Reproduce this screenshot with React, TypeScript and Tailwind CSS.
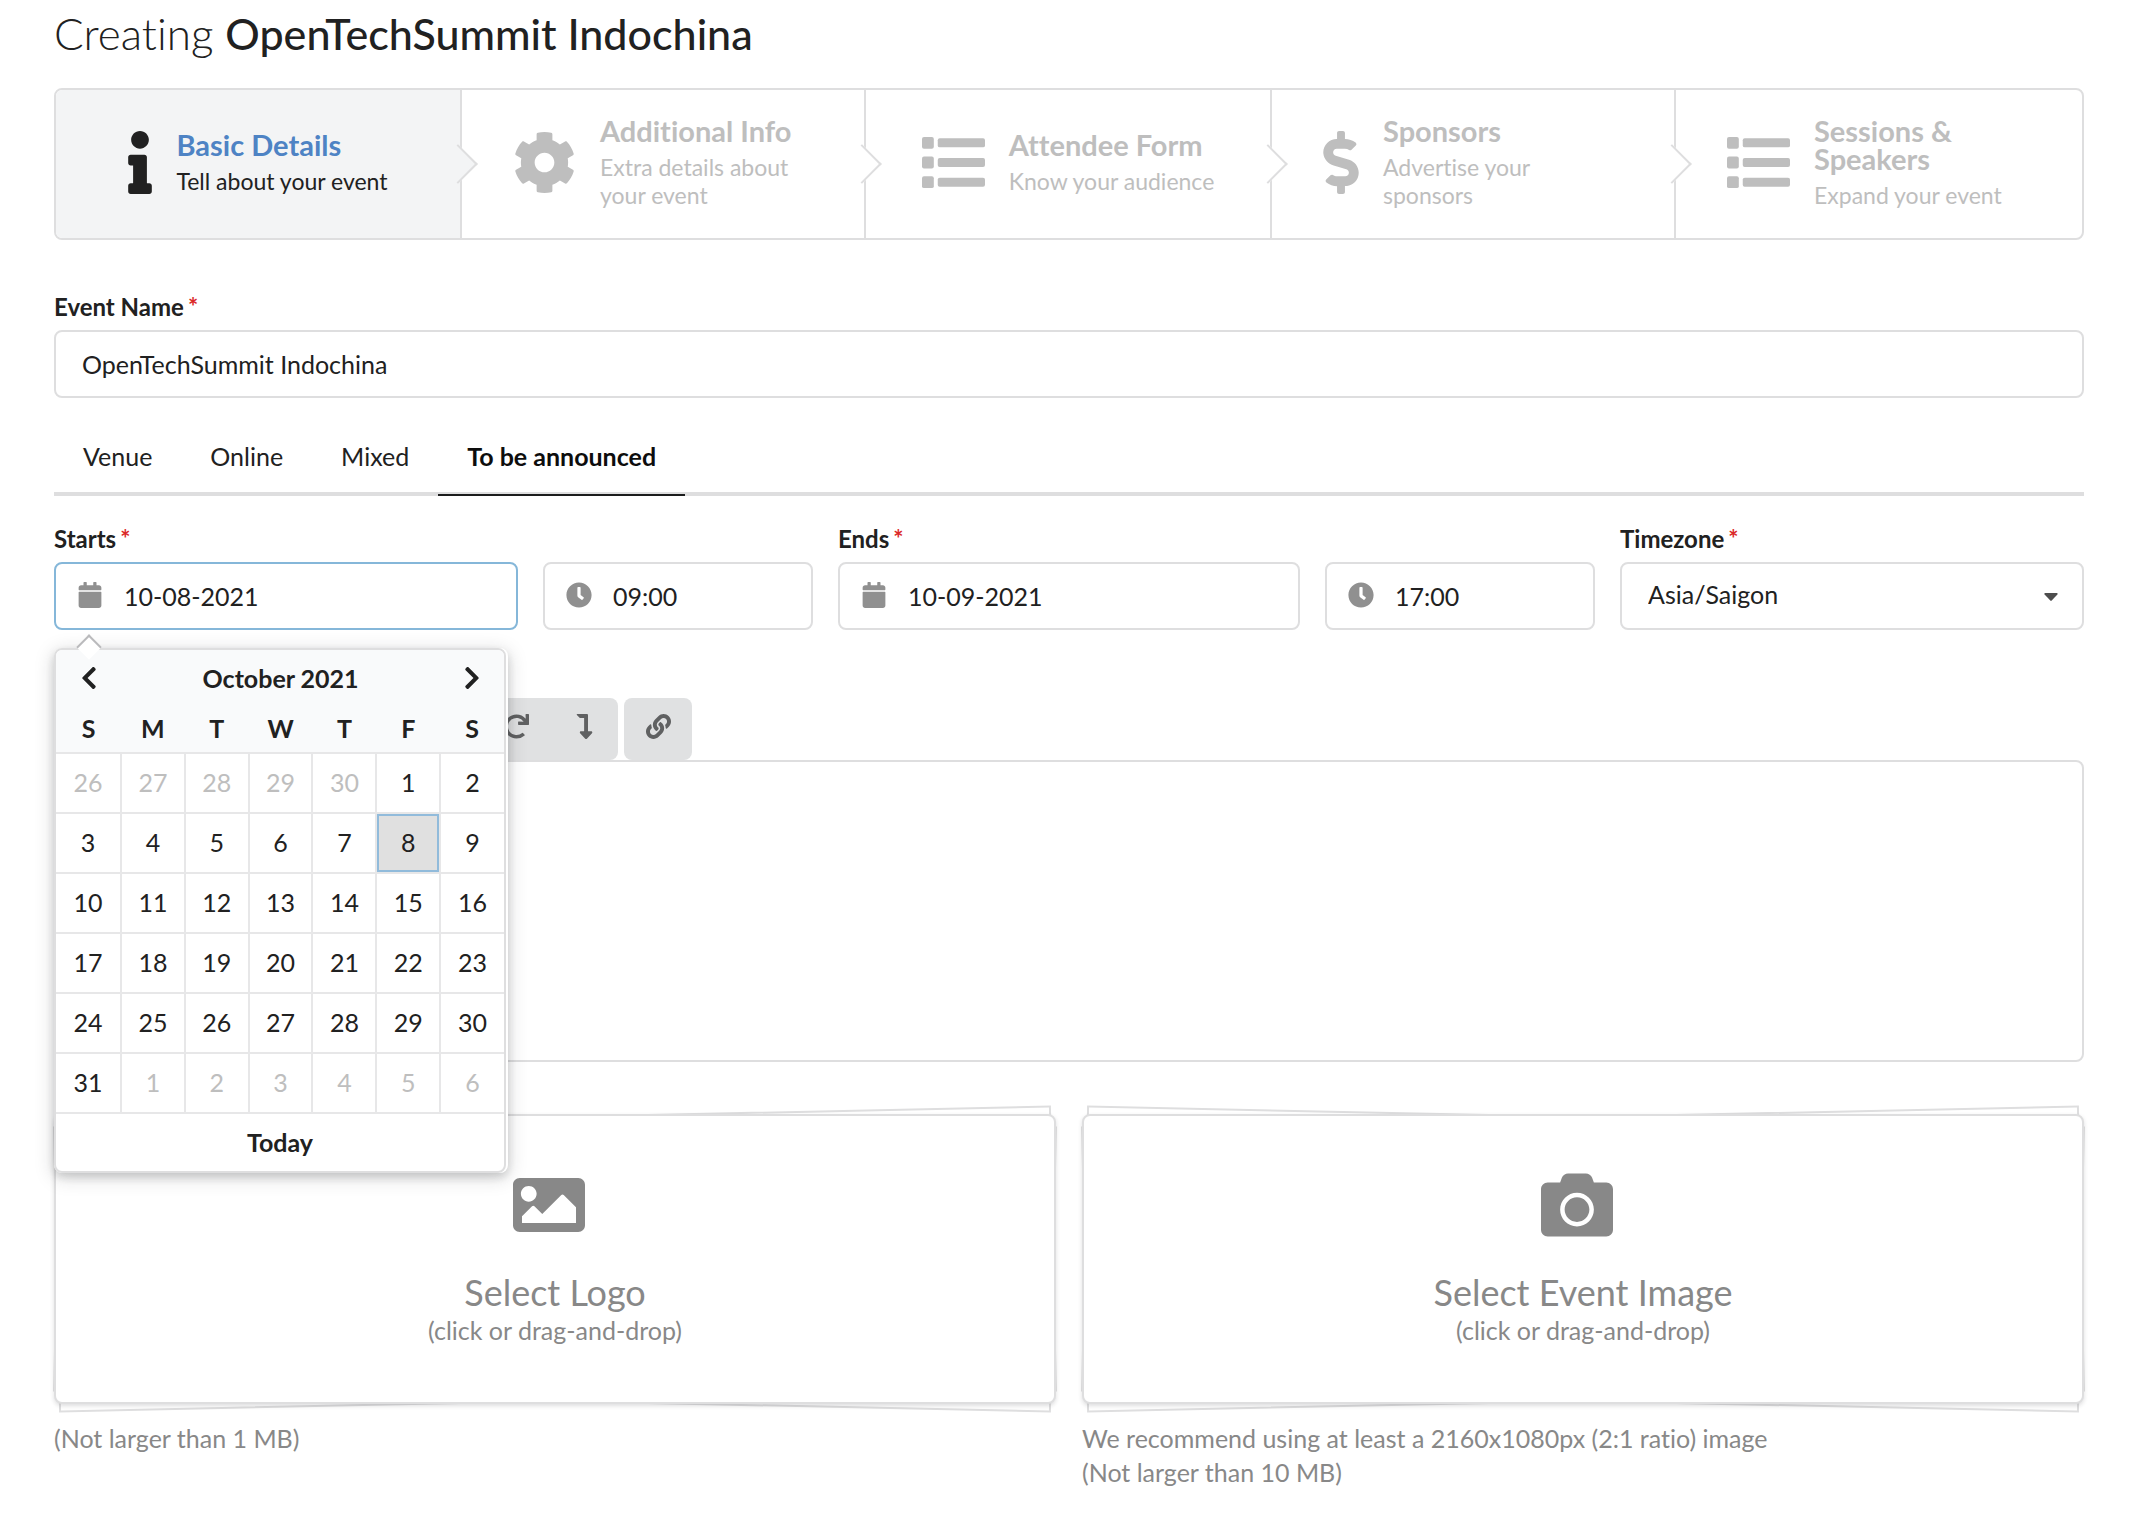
import type { ReactNode } from "react";
import type { IconType } from "react-icons";
import {
  FaBold,
  FaCalendar,
  FaCamera,
  FaChevronLeft,
  FaChevronRight,
  FaClock,
  FaCog,
  FaDollarSign,
  FaImage,
  FaInfo,
  FaItalic,
  FaLevelDownAlt,
  FaLink,
  FaListOl,
  FaListUl,
  FaRedo,
  FaStrikethrough,
  FaUndo,
} from "react-icons/fa";

function ThListIcon({ className }: { className: string }) {
  return (
    <svg viewBox="0 0 512 512" fill="currentColor" className={className} aria-hidden="true">
      {[48, 208, 368].map((y) => (
        <g key={y}>
          <rect x="0" y={y} width="96" height="96" rx="16" />
          <rect x="128" y={y + 11} width="384" height="74" rx="16" />
        </g>
      ))}
    </svg>
  );
}

type Step = { title: string; text: string; icon: ReactNode; active?: boolean };

const steps: Step[] = [
  { title: "Basic Details", text: "Tell about your event", icon: <FaInfo className="h-[63px] w-6" />, active: true },
  { title: "Additional Info", text: "Extra details about your event", icon: <FaCog className="size-[63px]" /> },
  { title: "Attendee Form", text: "Know your audience", icon: <ThListIcon className="size-[63px]" /> },
  { title: "Sponsors", text: "Advertise your sponsors", icon: <FaDollarSign className="h-[63px] w-9" /> },
  { title: "Sessions & Speakers", text: "Expand your event", icon: <ThListIcon className="size-[63px]" /> },
];

function Steps() {
  return (
    <ol className="mt-[26px] grid min-h-[152px] grid-cols-[406fr_404fr_406fr_404fr_406fr] rounded-lg border-2 border-[#dededf]">
      {steps.map((s, i) => (
        <li
          key={s.title}
          className={
            "relative flex items-center justify-center px-[51px] pb-[3px] " +
            (i < 4 ? "border-r-2 border-[#dededf] " : "") +
            (s.active ? "rounded-l-md bg-[#f3f4f5] text-[#212121]" : "text-[#bebebe]")
          }
        >
          <span className="mr-6 shrink-0">{s.icon}</span>
          <div className="min-w-0">
            <div className={"text-[29px] leading-7 font-bold " + (s.active ? "text-[#4e83c4]" : "")}>{s.title}</div>
            <div className="mt-2 text-[23px] leading-7">{s.text}</div>
          </div>
          {i < 4 && (
            <span
              className={
                "absolute top-1/2 -right-3 z-10 size-7 -translate-y-1/2 -rotate-45 border-r-2 border-b-2 border-[#dededf] " +
                (s.active ? "bg-[#f3f4f5]" : "bg-white")
              }
            />
          )}
        </li>
      ))}
    </ol>
  );
}

function FieldLabel({ htmlFor, children }: { htmlFor: string; children: ReactNode }) {
  return (
    <label htmlFor={htmlFor} className="mb-[6px] block text-2xl leading-[34px] font-bold">
      {children}
      <span className="ml-1 text-[#db2828]">*</span>
    </label>
  );
}

function IconInput({ id, label, value, icon: Icon, focused }: { id: string; label: string; value: string; icon: IconType; focused?: boolean }) {
  return (
    <div className="relative">
      <input
        id={id}
        aria-label={label}
        defaultValue={value}
        className={
          "block h-[68px] w-full rounded-lg border-2 bg-white pr-4 pl-[68px] text-[25px] outline-none " +
          (focused ? "border-[#85b7d9]" : "border-[#dededf]")
        }
      />
      <Icon className="pointer-events-none absolute top-5 left-[23px] size-[26px] text-[#909090]" />
    </div>
  );
}

const days = [
  [26, 27, 28, 29, 30, 1, 2],
  [3, 4, 5, 6, 7, 8, 9],
  [10, 11, 12, 13, 14, 15, 16],
  [17, 18, 19, 20, 21, 22, 23],
  [24, 25, 26, 27, 28, 29, 30],
  [31, 1, 2, 3, 4, 5, 6],
];

function CalendarPopup() {
  return (
    <div className="absolute top-full left-0 z-20 mt-[18px] w-[454px] rounded-lg bg-white shadow-[0_4px_8px_rgba(34,36,38,0.16),0_4px_20px_rgba(34,36,38,0.18)]">
      <span className="absolute -top-2.5 left-[26px] z-10 size-[18px] rotate-45 border-t-2 border-l-2 border-[#bababc] bg-white" />
      <div className="mr-0.5 overflow-hidden rounded-lg border-2 border-[#dededf]">
        <table className="w-full table-fixed border-collapse text-center text-[25px] leading-[34px]">
          <colgroup>
            <col className="w-[65px]" />
            <col span={6} />
          </colgroup>
          <thead className="bg-[#f9fafb]">
            <tr className="h-[56px]">
              <th>
                <button type="button" aria-label="Previous month" className="block w-full">
                  <FaChevronLeft className="mx-auto size-[26px]" />
                </button>
              </th>
              <th colSpan={5} className="font-bold">October 2021</th>
              <th>
                <button type="button" aria-label="Next month" className="block w-full">
                  <FaChevronRight className="mx-auto size-[26px]" />
                </button>
              </th>
            </tr>
            <tr className="h-[47px]">
              {["S", "M", "T", "W", "T", "F", "S"].map((d, i) => (
                <th key={i} className="pb-0.5 font-bold">{d}</th>
              ))}
            </tr>
          </thead>
          <tbody>
            {days.map((week, r) => (
              <tr key={r} className="h-[60px]">
                {week.map((d, c) => {
                  const outside = (r === 0 && d > 20) || (r === 5 && d < 10);
                  const selected = r === 1 && c === 5;
                  return (
                    <td
                      key={c}
                      className={
                        "border-t-2 border-[#e7e7e8] p-0 " +
                        (c > 0 ? "border-l-2 " : "") +
                        (outside ? "text-[#bebebe]" : "")
                      }
                    >
                      <button
                        type="button"
                        className={"block h-[58px] w-full pb-0.5 " + (selected ? "bg-[#e0e0e0] inset-ring-2 inset-ring-[#91bbdb]" : "")}
                      >
                        {d}
                      </button>
                    </td>
                  );
                })}
              </tr>
            ))}
            <tr className="h-[58px]">
              <td colSpan={7} className="border-t-2 border-[#e7e7e8] p-0">
                <button type="button" className="block h-[56px] w-full pb-0.5 font-bold">Today</button>
              </td>
            </tr>
          </tbody>
        </table>
      </div>
    </div>
  );
}

const toolGroups: { label: string; icon: IconType }[][] = [
  [
    { label: "Bold", icon: FaBold },
    { label: "Italic", icon: FaItalic },
    { label: "Strike", icon: FaStrikethrough },
  ],
  [{ label: "Numbered list", icon: FaListOl }],
  [{ label: "Bulleted list", icon: FaListUl }],
  [
    { label: "Undo", icon: FaUndo },
    { label: "Redo", icon: FaRedo },
    { label: "Line break", icon: FaLevelDownAlt },
  ],
  [{ label: "Link", icon: FaLink }],
];

function Editor() {
  return (
    <section className="mt-[68px]">
      <div className="flex gap-1.5 pl-0.5">
        {toolGroups.map((group, i) => (
          <div key={i} className="flex overflow-hidden rounded-lg bg-[#e0e1e2] text-[#606162]">
            {group.map(({ label, icon: Icon }) => (
              <button key={label} type="button" aria-label={label} className="flex h-[62px] w-[68px] items-center justify-center pb-1.5">
                <Icon className="size-[25px]" />
              </button>
            ))}
          </div>
        ))}
      </div>
      <textarea
        aria-label="Description"
        className="block h-[302px] w-full resize-none rounded-lg border-2 border-[#dededf] p-4 text-[25px] outline-none"
      />
    </section>
  );
}

function DropZone({ title, icon: Icon, notes }: { title: string; icon: IconType; notes: string[] }) {
  return (
    <div>
      <div className="relative isolate">
        <span className="absolute inset-0.5 -z-10 rotate-[1.2deg] border-2 border-[#dededf] bg-white" />
        <span className="absolute inset-0.5 -z-10 rotate-[-1.2deg] border-2 border-[#dededf] bg-white" />
        <button
          type="button"
          className="flex min-h-[290px] w-full flex-col items-center rounded-lg border-2 border-[#dededf] bg-white pt-[53px] text-[#888888] shadow-[0_2px_4px_rgba(34,36,38,0.15)]"
        >
          <Icon className="mr-[13px] size-[72px]" />
          <span className="mt-7 text-4xl leading-[46px]">{title}</span>
          <span className="text-[25px] leading-[30px]">(click or drag-and-drop)</span>
        </button>
      </div>
      <div className="mt-[17px] text-[25px] leading-[34px] text-[#888888]">
        {notes.map((n) => (
          <p key={n}>{n}</p>
        ))}
      </div>
    </div>
  );
}

export default function App() {
  const tabs = ["Venue", "Online", "Mixed", "To be announced"];
  return (
    <main className="min-h-screen bg-white pt-[5px] pr-[60px] pb-10 pl-[54px] font-['Lato',sans-serif] text-[#212121] [font-variant-ligatures:none]">
      <h1 className="text-[44px] leading-[56px] font-light">
        Creating <span className="text-[43px] font-medium">OpenTechSummit Indochina</span>
      </h1>
      <Steps />
      <form>
        <div className="mt-[50px]">
          <FieldLabel htmlFor="event-name">Event Name</FieldLabel>
          <input
            id="event-name"
            defaultValue="OpenTechSummit Indochina"
            className="block h-[68px] w-full rounded-lg border-2 border-[#dededf] px-[26px] text-[25px] outline-none"
          />
        </div>

        <nav className="mt-5 flex border-b-2 border-[#dededf]">
          {tabs.map((t, i) => (
            <a
              key={t}
              href="#"
              className={
                "-mb-0.5 border-b-2 px-[29px] pt-[21px] pb-[21px] text-[25px] leading-[34px] shadow-[inset_0_-2px_#dededf] " +
                (i === 3 ? "border-[#1b1c1d] font-bold text-[#0d0d0d]" : "border-[#dededf]")
              }
            >
              {t}
            </a>
          ))}
          <span className="-mb-0.5 flex-1 border-b-2 border-[#dededf] shadow-[inset_0_-2px_#dededf]" />
        </nav>

        <div className="mt-[26px] grid grid-cols-[464fr_270fr_462fr_270fr_464fr] items-end gap-x-[25px]">
          <div className="relative">
            <FieldLabel htmlFor="start-date">Starts</FieldLabel>
            <IconInput id="start-date" label="Start date" value="10-08-2021" icon={FaCalendar} focused />
            <CalendarPopup />
          </div>
          <IconInput id="start-time" label="Start time" value="09:00" icon={FaClock} />
          <div>
            <FieldLabel htmlFor="end-date">Ends</FieldLabel>
            <IconInput id="end-date" label="End date" value="10-09-2021" icon={FaCalendar} />
          </div>
          <IconInput id="end-time" label="End time" value="17:00" icon={FaClock} />
          <div>
            <FieldLabel htmlFor="timezone">Timezone</FieldLabel>
            <div className="relative">
              <select
                id="timezone"
                className="block h-[68px] w-full appearance-none rounded-lg border-2 border-[#dededf] bg-white px-[26px] pb-0.5 text-[25px] outline-none"
              >
                <option>Asia/Saigon</option>
              </select>
              <svg viewBox="0 0 14 8" className="pointer-events-none absolute top-[31px] right-[26px] h-2 w-3.5 fill-[#4d4d4d]" aria-hidden="true">
                <path d="M1.2 0h11.6c.8 0 1.1.8.6 1.4L7.7 7.6a1 1 0 0 1-1.4 0L.6 1.4C.1.8.4 0 1.2 0z" />
              </svg>
            </div>
          </div>
        </div>

        <Editor />

        <div className="mt-[52px] grid grid-cols-2 gap-[26px]">
          <DropZone title="Select Logo" icon={FaImage} notes={["(Not larger than 1 MB)"]} />
          <DropZone
            title="Select Event Image"
            icon={FaCamera}
            notes={["We recommend using at least a 2160x1080px (2:1 ratio) image", "(Not larger than 10 MB)"]}
          />
        </div>
      </form>
    </main>
  );
}
